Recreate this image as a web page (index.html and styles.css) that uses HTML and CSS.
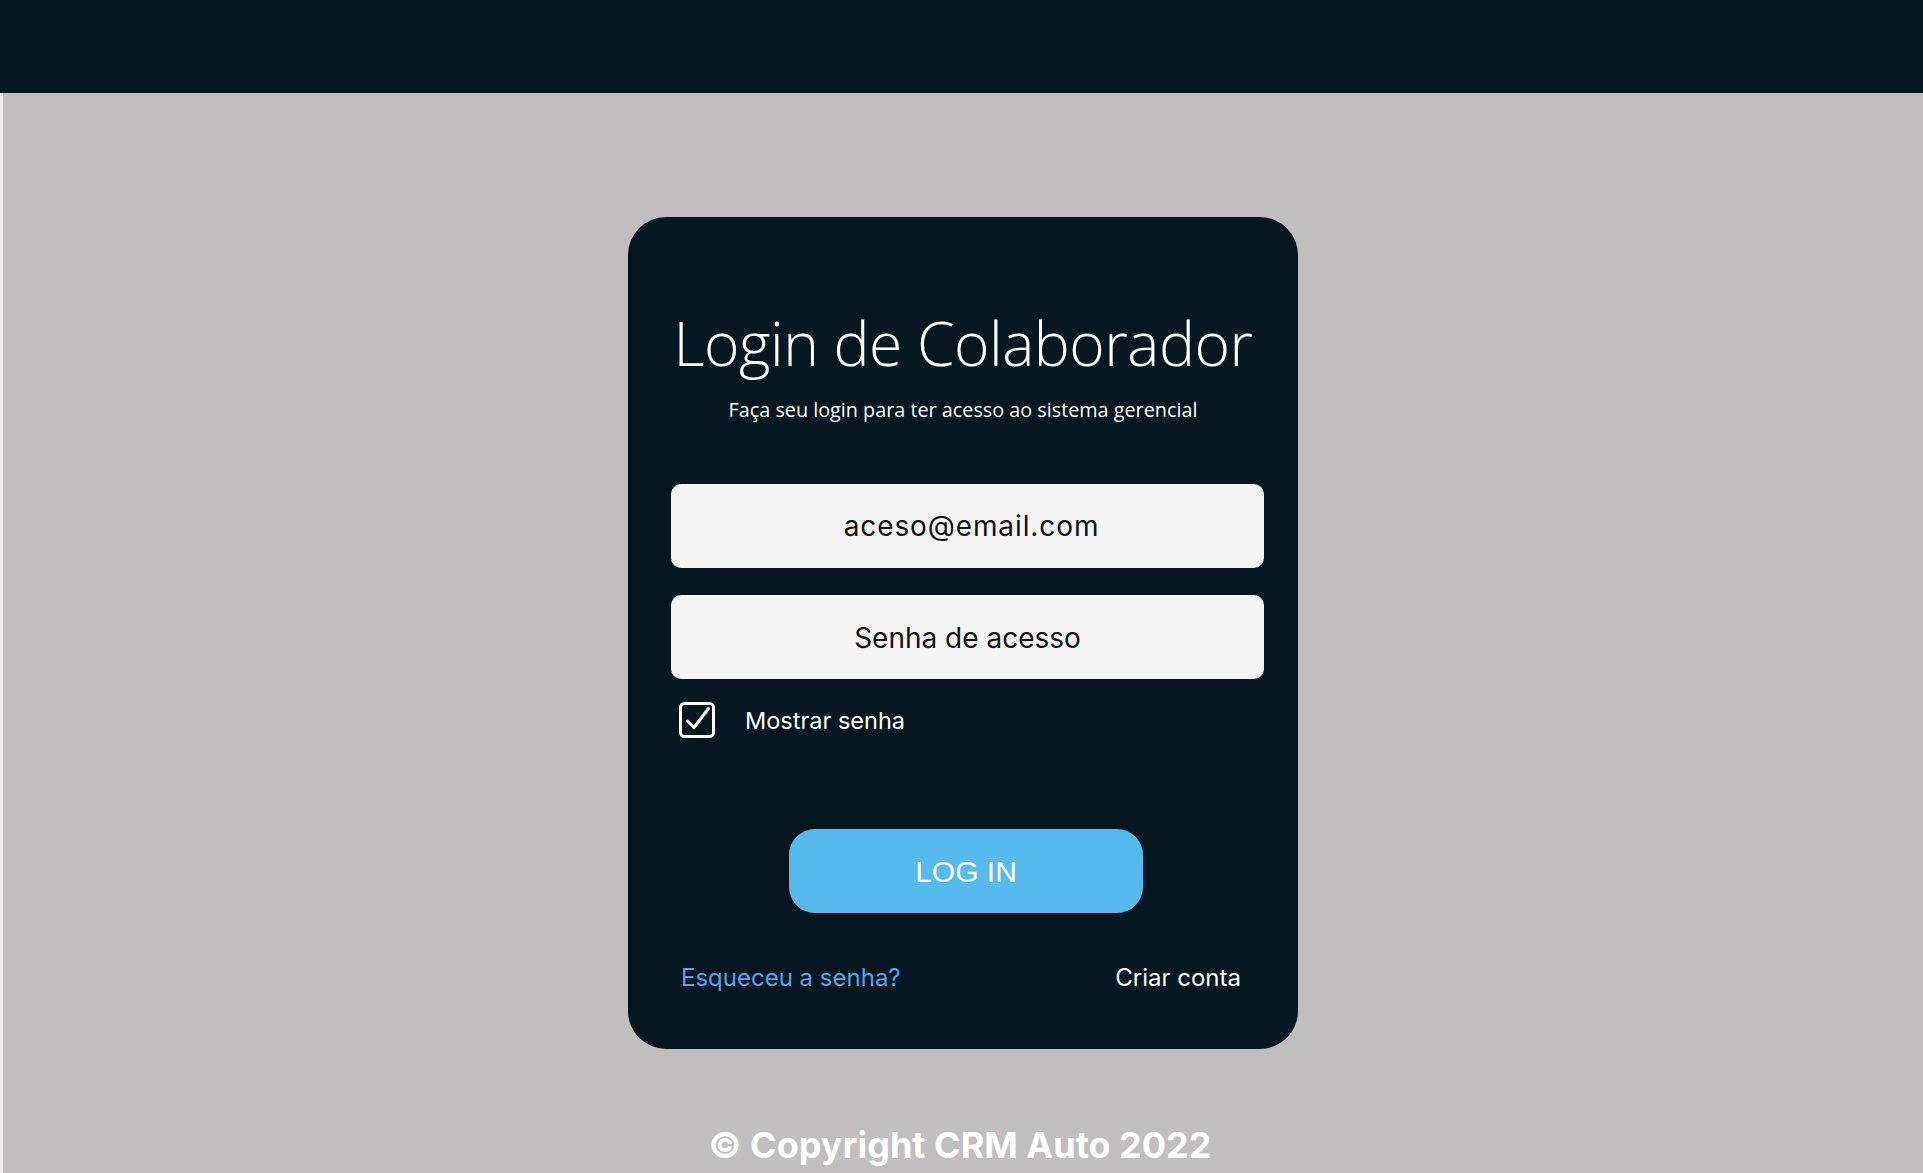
FILE: index.html
```html
<!DOCTYPE html>
<html lang="pt-BR">
<head>
<meta charset="utf-8">
<title>Login de Colaborador</title>
<link rel="stylesheet" href="styles.css">
</head>
<body>
<header class="topbar"></header>
<main class="main">
  <form class="card">
    <h1 class="title">Login de Colaborador</h1>
    <p class="subtitle">Faça seu login para ter acesso ao sistema gerencial</p>
    <div class="field field-email">aceso@email.com</div>
    <div class="field field-pass">Senha de acesso</div>
    <label class="show">
      <svg class="check" width="38" height="38" viewBox="0 0 38 38" aria-hidden="true">
        <rect x="1.5" y="2.5" width="33" height="33" rx="4" fill="none" stroke="#fff" stroke-width="3"/>
        <path d="M8.5 20 L15 26.5 L29.5 7.5" fill="none" stroke="#fff" stroke-width="3" stroke-linecap="round" stroke-linejoin="round"/>
      </svg>
      <span>Mostrar senha</span>
    </label>
    <button type="button" class="btn">LOG IN</button>
    <div class="links">
      <a class="forgot" href="#">Esqueceu a senha?</a>
      <a class="create" href="#">Criar conta</a>
    </div>
  </form>
  <footer class="footer">© Copyright CRM Auto 2022</footer>
</main>
</body>
</html>
```

FILE: styles.css
```css
html, body {
  margin: 0;
  padding: 0;
}
body {
  background: #c0bebe;
  font-family: Inter, "Noto Sans", sans-serif;
  height: 1173px;
  overflow: hidden;
}
.topbar {
  height: 93px;
  background: #061722;
}
.main {
  border-left: 3px solid #ececec;
  height: 1080px;
  display: flex;
  flex-direction: column;
  align-items: center;
}
.card {
  margin-top: 124px;
  width: 670px;
  height: 832px;
  box-sizing: border-box;
  background: #061722;
  border-radius: 38px;
  display: flex;
  flex-direction: column;
  padding-top: 91px;
}
.title {
  margin: 0;
  text-align: center;
  color: #fff;
  font-family: "Open Sans", "Noto Sans", sans-serif;
  font-weight: 300;
  font-size: 60.5px;
  line-height: 70px;
  letter-spacing: -0.5px;
}
.subtitle {
  margin: 20px 0 0;
  text-align: center;
  color: #fff;
  font-family: "Open Sans", "Noto Sans", sans-serif;
  font-size: 19.8px;
  line-height: 24px;
}
.field {
  margin: 62px 0 0 43px;
  width: 593px;
  height: 84px;
  box-sizing: border-box;
  background: #f5f5f5;
  border-radius: 10px;
  display: flex;
  align-items: center;
  justify-content: center;
  color: #111;
  font-size: 28px;
}
.field-email {
  padding-left: 8px;
  letter-spacing: 0.9px;
}
.field-pass {
  margin-top: 27px;
  padding-top: 2px;
}
.show {
  margin: 22px 0 0 51px;
  display: flex;
  align-items: center;
  gap: 28px;
  color: #fff;
  font-size: 23.5px;
  height: 38px;
}
.btn {
  margin: 90px 0 0 161px;
  width: 354px;
  height: 84px;
  border: none;
  border-radius: 26px;
  background: #57baed;
  color: #fff;
  font-family: "Liberation Sans", Arial, sans-serif;
  font-size: 30px;
  padding: 2px 0 0;
}
.links {
  margin: 50px 57px 0 53px;
  display: flex;
  justify-content: space-between;
  font-size: 24px;
  line-height: 30px;
}
.links a {
  text-decoration: none;
}
.forgot {
  color: #4aa8ec;
}
.create {
  color: #fff;
}
.footer {
  margin-top: 74px;
  margin-right: 6px;
  color: #fff;
  font-weight: 700;
  font-size: 36px;
  line-height: 44px;
}
```
